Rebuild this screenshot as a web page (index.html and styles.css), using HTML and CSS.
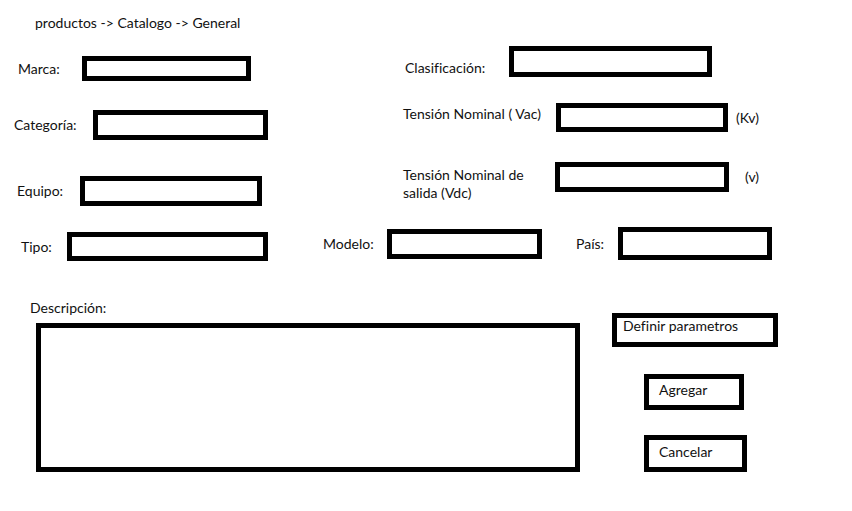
FILE: index.html
```html
<!DOCTYPE html>
<html lang="es">
<head>
<meta charset="utf-8">
<meta name="viewport" content="width=device-width, initial-scale=1">
<title>Productos - Catalogo - General</title>
<link rel="stylesheet" href="styles.css">
</head>
<body>
<nav class="breadcrumb"><a href="#">productos</a> -&gt; <a href="#">Catalogo</a> -&gt; <a href="#">General</a></nav>
<form class="product">
  <div class="columns">
    <div class="column column-left">
      <div class="field field-marca">
        <label for="marca">Marca:</label>
        <input class="short" id="marca" type="text">
      </div>
      <div class="field field-categoria">
        <label for="categoria">Categoría:</label>
        <input id="categoria" type="text">
      </div>
      <div class="field field-equipo">
        <label for="equipo">Equipo:</label>
        <input id="equipo" type="text">
      </div>
    </div>
    <div class="column column-right">
      <div class="field field-clasificacion">
        <label for="clasificacion">Clasificación:</label>
        <input id="clasificacion" type="text">
      </div>
      <div class="field field-vac">
        <label for="vac">Tensión Nominal ( Vac)</label>
        <input id="vac" type="text">
        <span class="unit">(Kv)</span>
      </div>
      <div class="field field-vdc">
        <label for="vdc">Tensión Nominal de<br>salida (Vdc)</label>
        <input id="vdc" type="text">
        <span class="unit">(v)</span>
      </div>
    </div>
  </div>
  <div class="details">
    <div class="field field-tipo">
      <label for="tipo">Tipo:</label>
      <input id="tipo" type="text">
    </div>
    <div class="field field-modelo">
      <label for="modelo">Modelo:</label>
      <input id="modelo" type="text">
    </div>
    <div class="field field-pais">
      <label for="pais">País:</label>
      <input class="tall" id="pais" type="text">
    </div>
  </div>
  <div class="bottom">
    <div class="description">
      <label for="descripcion">Descripción:</label>
      <textarea id="descripcion"></textarea>
    </div>
    <div class="actions">
      <button class="define" type="button">Definir parametros</button>
      <button class="add" type="submit">Agregar</button>
      <button class="cancel" type="button">Cancelar</button>
    </div>
  </div>
</form>
</body>
</html>
```

FILE: styles.css
```css
* {
  box-sizing: border-box;
}

body {
  margin: 0;
  background: #fff;
  color: #111;
  font: 14px/18px Lato, "Liberation Sans", sans-serif;
  font-variant-ligatures: none;
}

.breadcrumb {
  padding: 14px 35px 0;
}

.breadcrumb a {
  color: inherit;
  text-decoration: none;
}

input,
textarea,
button {
  min-width: 0;
  margin: 0;
  border: 5px solid #000;
  border-radius: 0;
  background: #fff;
  color: inherit;
  font: inherit;
  font-variant-ligatures: none;
}

input {
  width: 100%;
  height: 30px;
  padding: 0 4px;
}

input.short {
  height: 25px;
}

input.tall {
  height: 33px;
}

label,
.unit {
  white-space: nowrap;
}

/* Column tracks are shares of the form width */
.columns {
  display: grid;
  grid-template-columns: 403fr 449fr;
}

.column {
  display: flex;
  flex-direction: column;
}

.column-left {
  padding-top: 24px;
}

.column-right {
  padding-top: 14px;
}

.field {
  display: grid;
  align-items: center;
}

.column-left label {
  grid-column: 2;
}

.field-marca {
  grid-template-columns: 18fr 64fr 169fr 152fr;
}

.field-categoria {
  grid-template-columns: 14fr 79fr 175fr 135fr;
  margin-top: 29px;
}

.field-equipo {
  grid-template-columns: 17fr 63fr 182fr 141fr;
  margin-top: 36px;
}

.field-clasificacion {
  grid-template-columns: 106fr 203fr 140fr;
  align-items: end;
}

.field-clasificacion input {
  height: 31px;
}

.field-clasificacion label {
  padding-left: 2px;
}

.field-vac,
.field-vdc {
  align-items: start;
}

.field-vac {
  grid-template-columns: 153fr 172fr 124fr;
  margin-top: 26px;
}

.field-vac input {
  height: 29px;
}

.field-vdc {
  grid-template-columns: 152fr 174fr 123fr;
  margin-top: 30px;
}

.field-vac label {
  padding-top: 2px;
}

.field-vdc label {
  padding-top: 4px;
}

.unit {
  padding: 6px 0 0 8px;
}

.field-vdc .unit {
  padding-left: 16px;
}

.details {
  display: grid;
  grid-template-columns: 268fr 274fr 230fr 80fr;
  min-height: 34px;
  margin-top: 21px;
}

.field-tipo {
  grid-template-columns: 21fr 46fr 201fr;
  align-self: end;
}

.field-tipo input {
  height: 29px;
}

.field-tipo label,
.field-modelo label,
.field-pais label {
  grid-column: 2;
}

.field-modelo {
  grid-template-columns: 55fr 64fr 155fr;
  align-self: center;
}

.field-pais {
  grid-template-columns: 34fr 42fr 154fr;
  align-self: start;
}

.bottom {
  display: grid;
  grid-template-columns: 580fr 32fr 166fr 74fr;
  align-items: end;
  margin-top: 38px;
}

.description {
  display: flex;
  flex-direction: column;
  gap: 6px;
  padding-left: 30px;
}

.description textarea {
  height: 149px;
  margin-left: 6px;
  resize: none;
}

.actions {
  grid-column: 3;
  display: flex;
  flex-direction: column;
}

button {
  padding: 0 10px 4px;
  line-height: 16px;
  text-align: left;
}

.define {
  height: 34px;
  padding: 0 6px 8px;
}

.add,
.cancel {
  margin-left: 32px;
}

.add {
  width: 60%;
  height: 36px;
  margin-top: 27px;
}

.cancel {
  width: 62%;
  height: 37px;
  margin-top: 25px;
}
```
